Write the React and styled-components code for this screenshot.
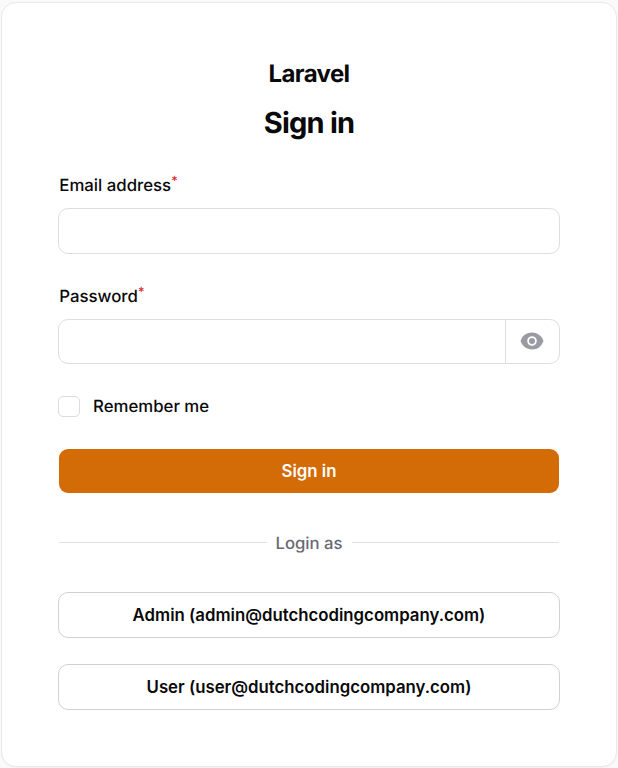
import React from "react";
import styled, { createGlobalStyle } from "styled-components";

const GlobalStyle = createGlobalStyle`
  *, *::before, *::after { box-sizing: border-box; }
  html, body { margin: 0; background: #fafafa; }
  body {
    font-family: Inter, sans-serif;
    color: #09090b;
    font-size: 16.8px;
    line-height: 26px;
    overflow: hidden;
    text-rendering: geometricPrecision;
    -webkit-font-smoothing: antialiased;
  }
  button, input { font: inherit; color: inherit; }
`;

const Page = styled.main`
  height: 768px;
  padding: 2px 1px 1px;
`;

const Card = styled.section`
  display: flex;
  flex-direction: column;
  height: 765px;
  padding: 55px 56px 0;
  background: #fff;
  border: 1px solid #e9e9ea;
  border-radius: 15px;
  box-shadow: 0 1px 2px rgba(0, 0, 0, 0.04);
`;

const Brand = styled.div`
  height: 32px;
  font-size: 24px;
  font-weight: 700;
  line-height: 32px;
  letter-spacing: -0.6px;
  text-align: center;
`;

const Title = styled.h1`
  margin: 13px 0 0;
  height: 40px;
  font-size: 29px;
  font-weight: 700;
  line-height: 40px;
  letter-spacing: -0.8px;
  text-align: center;
`;

const Form = styled.form`
  display: flex;
  flex-direction: column;
  margin-top: 29px;
`;

const Field = styled.div`
  display: flex;
  flex-direction: column;
  gap: 10px;
  margin-bottom: 29px;
`;

const Label = styled.label`
  height: 26px;
  padding-left: 1.3px;
  font-weight: 500;
  line-height: 28px;
`;

const Required = styled.sup`
  color: #dc2626;
  font-size: 12.6px;
  font-weight: 500;
  line-height: 0;
  vertical-align: 6px;
`;

const InputFrame = styled.div`
  display: flex;
  height: ${({ $height }) => $height}px;
  border: 1px solid #dedee0;
  border-radius: 10px;
  background: #fff;
`;

const Input = styled.input`
  flex: 1;
  min-width: 0;
  padding: 0 13px;
  border: 0;
  outline: 0;
  background: transparent;
`;

const RevealButton = styled.button`
  display: flex;
  align-items: center;
  justify-content: center;
  width: 54px;
  padding: 0 1px 1px 0;
  border: 0;
  border-left: 1px solid #dedee0;
  background: transparent;
  color: #9a9aa3;
`;

const Remember = styled.label`
  display: flex;
  align-items: center;
  gap: 13px;
  height: 26px;
  font-weight: 500;
`;

const Checkbox = styled.input`
  appearance: none;
  width: 22px;
  height: 21px;
  margin: 1px 0 0;
  border: 1px solid #dcdcdf;
  border-radius: 5px;
  background: #fff;
`;

const Caption = styled.span`
  padding-top: 2px;
`;

const Submit = styled.button`
  height: 44px;
  margin: 30px 1px 0;
  border: 0;
  border-radius: 9px;
  background: #d36b07;
  color: #fff;
  font-weight: 600;
`;

const Divider = styled.div`
  display: flex;
  align-items: center;
  gap: 9px;
  height: 26px;
  margin: 37px 1px 36px;
  color: #696972;
  font-weight: 500;
  font-size: 16.7px;
  &::before, &::after {
    content: "";
    flex: 1;
    height: 1px;
    margin-bottom: 2px;
    background: #e0e0e2;
  }
`;

const Accounts = styled.div`
  display: flex;
  flex-direction: column;
  gap: 26px;
`;

const AccountButton = styled.button`
  height: 46px;
  border: 1px solid #d1d1d4;
  border-radius: 10px;
  background: #fff;
  font-weight: 600;
`;

const EyeIcon = () => (
  <svg width="24" height="24" viewBox="0 0 20 20" fill="currentColor" aria-hidden="true">
    <path d="M10 12.5a2.5 2.5 0 1 0 0-5 2.5 2.5 0 0 0 0 5Z" />
    <path fillRule="evenodd" clipRule="evenodd" d="M.664 10.59a1.651 1.651 0 0 1 0-1.186A10.004 10.004 0 0 1 10 3c4.257 0 7.893 2.66 9.336 6.41.147.381.146.804 0 1.186A10.004 10.004 0 0 1 10 17c-4.257 0-7.893-2.66-9.336-6.41ZM14 10a4 4 0 1 1-8 0 4 4 0 0 1 8 0Z" />
  </svg>
);

const accounts = [
  "Admin (admin@dutchcodingcompany.com)",
  "User (user@dutchcodingcompany.com)",
];

export default function App() {
  return (
    <>
      <GlobalStyle />
      <Page>
        <Card>
          <Brand>Laravel</Brand>
          <Title>Sign in</Title>
          <Form onSubmit={(event) => event.preventDefault()}>
            <Field>
              <Label htmlFor="email">Email address<Required>*</Required></Label>
              <InputFrame $height={46}><Input id="email" type="email" /></InputFrame>
            </Field>
            <Field>
              <Label htmlFor="password">Password<Required>*</Required></Label>
              <InputFrame $height={45}>
                <Input id="password" type="password" />
                <RevealButton type="button" aria-label="Show password"><EyeIcon /></RevealButton>
              </InputFrame>
            </Field>
            <Remember><Checkbox type="checkbox" /><Caption>Remember me</Caption></Remember>
            <Submit type="submit">Sign in</Submit>
          </Form>
          <Divider><Caption>Login as</Caption></Divider>
          <Accounts>
            {accounts.map((account) => <AccountButton key={account} type="button">{account}</AccountButton>)}
          </Accounts>
        </Card>
      </Page>
    </>
  );
}
